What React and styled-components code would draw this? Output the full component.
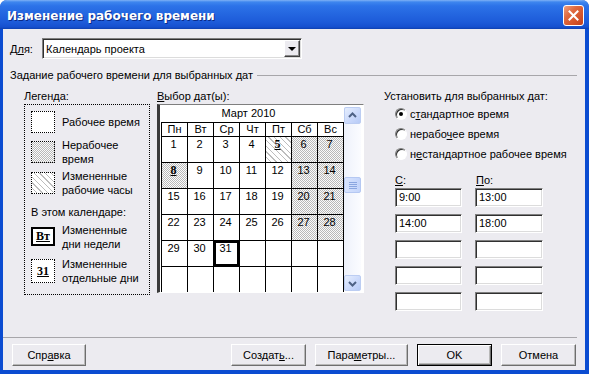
import React from 'react';
import styled, { createGlobalStyle } from 'styled-components';

const GlobalStyle = createGlobalStyle`
  html, body {
    margin: 0;
    padding: 0;
    background: #ffffff;
  }
  body {
    font-family: "Liberation Sans", Arial, sans-serif;
    font-size: 11px;
    color: #000;
  }
  * {
    box-sizing: border-box;
  }
`;

// Ячейки календаря: март 2010 начинается с понедельника
const weekDays = ['Пн', 'Вт', 'Ср', 'Чт', 'Пт', 'Сб', 'Вс'];

const buildDays = () =>
  Array.from({ length: 42 }, (_, i) => {
    const day = i < 31 ? i + 1 : null;
    const col = i % 7;
    let kind = 'work';
    if (day && col >= 5) kind = 'off';
    if (day === 5) kind = 'changed';
    if (day === 8) kind = 'off';
    return {
      id: i,
      day,
      kind,
      mark: day === 5 || day === 8,
      selected: day === 31,
    };
  });

const times = [
  ['9:00', '13:00'],
  ['14:00', '18:00'],
  ['', ''],
  ['', ''],
  ['', ''],
];

const App = () => {
  const days = buildDays();

  return (
    <>
      <GlobalStyle />
      <Window>
        <TitleBar>
          <Title>Изменение рабочего времени</Title>
          <CloseButton>
            <svg width="11" height="11" viewBox="0 0 11 11">
              <path d="M1.5 1.5 L9.5 9.5 M9.5 1.5 L1.5 9.5" stroke="#fff" strokeWidth="2" strokeLinecap="square" />
            </svg>
          </CloseButton>
        </TitleBar>

        <Frame>
          <ForRow>
            <FieldLabel>Д<u>л</u>я:</FieldLabel>
            <Combo>
              <ComboText>Календарь проекта</ComboText>
              <ComboButton>
                <Triangle />
              </ComboButton>
            </Combo>
          </ForRow>

          <GroupHeader>
            <span>Задание рабочего времени для выбранных дат</span>
            <GroupLine />
          </GroupHeader>

          <Main>
            <Column>
              <SectionLabel>Легенда:</SectionLabel>
              <LegendBox>
                <LegendItem $h={22}>
                  <Swatch $kind="work" />
                  <LegendText>Рабочее время</LegendText>
                </LegendItem>
                <LegendItem $h={22} $mt={8}>
                  <Swatch $kind="off" />
                  <LegendText>Нерабочее<br />время</LegendText>
                </LegendItem>
                <LegendItem $h={22} $mt={9}>
                  <Swatch $kind="changed" />
                  <LegendText>Измененные<br />рабочие часы</LegendText>
                </LegendItem>
                <CalendarNote>В этом календаре:</CalendarNote>
                <LegendItem $h={19} $mt={8}>
                  <Swatch $kind="week">Вт</Swatch>
                  <LegendText>Измененные<br />дни недели</LegendText>
                </LegendItem>
                <LegendItem $h={24} $mt={13}>
                  <Swatch $kind="single">31</Swatch>
                  <LegendText>Измененные<br />отдельные дни</LegendText>
                </LegendItem>
              </LegendBox>
            </Column>

            <Column>
              <SectionLabel><u>В</u>ыбор дат(ы):</SectionLabel>
              <CalendarBox>
                <MonthArea>
                  <MonthTitle>Март 2010</MonthTitle>
                  <DayGrid>
                    {weekDays.map((d) => (
                      <DayHead key={d}>{d}</DayHead>
                    ))}
                    {days.map((c) => (
                      <DayCell key={c.id} $kind={c.kind} $selected={c.selected}>
                        {c.day && <DayNum $mark={c.mark}>{c.day}</DayNum>}
                      </DayCell>
                    ))}
                  </DayGrid>
                </MonthArea>
                <Scrollbar>
                  <ScrollButton>
                    <svg width="15" height="15" viewBox="0 0 15 15">
                      <path d="M4 9 L7.5 5.5 L11 9" fill="none" stroke="#4d6185" strokeWidth="2" />
                    </svg>
                  </ScrollButton>
                  <ScrollTrack>
                    <ScrollThumb>
                      <svg width="8" height="8" viewBox="0 0 8 8">
                        <path d="M0 1.5 H8 M0 3.5 H8 M0 5.5 H8 M0 7.5 H8" stroke="#8aa6e0" strokeWidth="1" />
                      </svg>
                    </ScrollThumb>
                  </ScrollTrack>
                  <ScrollButton $h={16}>
                    <svg width="15" height="15" viewBox="0 0 15 15">
                      <path d="M4 6 L7.5 9.5 L11 6" fill="none" stroke="#4d6185" strokeWidth="2" />
                    </svg>
                  </ScrollButton>
                </Scrollbar>
              </CalendarBox>
            </Column>

            <Divider />

            <RightPanel>
              <SectionLabel>Установить для выбранных дат:</SectionLabel>
              <RadioGroup>
                <RadioRow>
                  <Radio $checked />
                  <span>с<u>т</u>андартное время</span>
                </RadioRow>
                <RadioRow>
                  <Radio />
                  <span>нерабо<u>ч</u>ее время</span>
                </RadioRow>
                <RadioRow>
                  <Radio />
                  <span>н<u>е</u>стандартное рабочее время</span>
                </RadioRow>
              </RadioGroup>
              <TimeLabels>
                <span><u>С</u>:</span>
                <span><u>П</u>о:</span>
              </TimeLabels>
              <TimeGrid>
                {times.map(([from, to], i) => (
                  <React.Fragment key={i}>
                    <TimeInput>{from}</TimeInput>
                    <TimeInput>{to}</TimeInput>
                  </React.Fragment>
                ))}
              </TimeGrid>
            </RightPanel>
          </Main>

          <BottomLine />

          <ButtonRow>
            <Button $w={74}>Спр<u>а</u>вка</Button>
            <ButtonGroup>
              <Button $w={75}>Создат<u>ь</u>...</Button>
              <Button $w={93}>Пара<u>м</u>етры...</Button>
              <Button $w={75} $default>OK</Button>
              <Button $w={75}>Отмена</Button>
            </ButtonGroup>
          </ButtonRow>
        </Frame>
      </Window>
    </>
  );
};

const Window = styled.div`
  width: 589px;
  height: 374px;
  display: flex;
  flex-direction: column;
  background: #0b4cd1;
  border-radius: 7px 7px 0 0;
  overflow: hidden;
`;

const TitleBar = styled.div`
  height: 29px;
  flex-shrink: 0;
  display: flex;
  align-items: center;
  justify-content: space-between;
  padding: 0 5px 0 7px;
  background: linear-gradient(
    to bottom,
    #7fb1f5 0px,
    #3e86ee 2px,
    #2c72e8 6px,
    #2466e0 14px,
    #1d5bd9 22px,
    #1650cf 27px,
    #0e40b0 29px
  );
`;

const Title = styled.div`
  font-family: "DejaVu Sans", Verdana, sans-serif;
  font-weight: bold;
  font-size: 12px;
  color: #ffffff;
  padding-top: 3px;
  text-shadow: 1px 1px 0 #0a2a86;
`;

const CloseButton = styled.div`
  width: 21px;
  height: 21px;
  margin-top: 2px;
  border: 1px solid #ffffff;
  border-radius: 3px;
  display: flex;
  align-items: center;
  justify-content: center;
  background: linear-gradient(135deg, #f0a07f 0%, #e06a40 35%, #d4532a 70%, #c0401c 100%);
`;

const Frame = styled.div`
  flex: 1;
  margin: 0 4px 4px 3px;
  background: #ecebf0;
  display: flex;
  flex-direction: column;
`;

const ForRow = styled.div`
  margin-top: 9px;
  height: 21px;
  display: flex;
  align-items: center;
  padding-left: 7px;
`;

const FieldLabel = styled.span`
  width: 32px;
`;

const Combo = styled.div`
  width: 260px;
  height: 21px;
  display: flex;
  align-items: center;
  background: #ffffff;
  border: 1px solid;
  border-color: #7f7f7f #ffffff #ffffff #7f7f7f;
  box-shadow: inset 1px 1px 0 #303030, inset -1px -1px 0 #dcdcdc;
`;

const ComboText = styled.span`
  flex: 1;
  padding-left: 3px;
`;

const ComboButton = styled.div`
  width: 16px;
  height: 17px;
  margin-right: 1px;
  display: flex;
  align-items: center;
  justify-content: center;
  background: #ecebf0;
  border: 1px solid;
  border-color: #ffffff #404040 #404040 #ffffff;
  box-shadow: inset -1px -1px 0 #8a8a8a;
`;

const Triangle = styled.span`
  width: 0;
  height: 0;
  border-left: 4px solid transparent;
  border-right: 4px solid transparent;
  border-top: 4px solid #000;
  margin-top: 1px;
`;

const GroupHeader = styled.div`
  margin-top: 9px;
  height: 14px;
  display: flex;
  align-items: center;
  padding: 0 8px 0 7px;
`;

const GroupLine = styled.div`
  flex: 1;
  height: 1px;
  margin-left: 4px;
  background: #a7a6aa;
`;

const Main = styled.div`
  margin-top: 1px;
  height: 245px;
  display: grid;
  grid-template-columns: 126px 208px 1px 1fr;
  column-gap: 7px;
  padding-left: 21px;
`;

const Column = styled.div`
  display: flex;
  flex-direction: column;
  padding-top: 6px;
`;

const SectionLabel = styled.div`
  height: 14px;
  line-height: 14px;
  white-space: nowrap;
`;

const LegendBox = styled.div`
  margin-top: 1px;
  height: 191px;
  border: 1px dotted #000;
  padding: 6px;
  display: flex;
  flex-direction: column;
`;

const LegendItem = styled.div`
  height: ${(p) => p.$h}px;
  margin-top: ${(p) => p.$mt || 0}px;
  display: flex;
  align-items: center;
  gap: 7px;
  flex-shrink: 0;
`;

const swatchBg = {
  work: '#ffffff',
  off: 'repeating-conic-gradient(#b9b9b9 0 25%, #fbfbfb 0 50%) 0 0 / 2px 2px',
  changed: 'repeating-linear-gradient(45deg, #ffffff 0 3px, #bdbdbd 3px 4px)',
  week: '#ffffff',
  single: '#ffffff',
};

const Swatch = styled.div`
  width: 24px;
  height: 100%;
  flex-shrink: 0;
  background: ${(p) => swatchBg[p.$kind]};
  border: ${(p) => (p.$kind === 'week' ? '2px solid #000' : '1px dotted #000')};
  display: flex;
  align-items: center;
  justify-content: center;
  font-family: "Liberation Serif", "Times New Roman", serif;
  font-weight: bold;
  font-size: 12px;
  text-decoration: underline;
`;

const LegendText = styled.div`
  line-height: 14px;
  white-space: nowrap;
`;

const CalendarNote = styled.div`
  margin-top: 11px;
  height: 14px;
  line-height: 14px;
  white-space: nowrap;
`;

const CalendarBox = styled.div`
  margin-top: 1px;
  width: 207px;
  height: 189px;
  display: flex;
  overflow: hidden;
  background: #ffffff;
  border-top: 1px solid #7f7f7f;
  border-left: 3px solid #3a3a3a;
  border-right: 1px solid #ffffff;
  border-bottom: 1px solid #ffffff;
`;

const MonthArea = styled.div`
  margin-left: 1px;
  width: 183px;
  display: flex;
  flex-direction: column;
`;

const MonthTitle = styled.div`
  height: 17px;
  line-height: 17px;
  text-align: center;
  padding-right: 8px;
  flex-shrink: 0;
`;

const DayGrid = styled.div`
  display: grid;
  grid-template-columns: repeat(7, 25px);
  grid-template-rows: 13px repeat(6, 25px);
  gap: 1px;
  background: #000;
  border: 1px solid #000;
  flex-shrink: 0;
`;

const DayHead = styled.div`
  background: #ffffff;
  text-align: center;
  line-height: 13px;
`;

const DayCell = styled.div`
  background: ${(p) => swatchBg[p.$kind]};
  box-shadow: ${(p) => (p.$selected ? 'inset 0 0 0 2px #000' : 'none')};
  padding-top: 1px;
`;

const DayNum = styled.div`
  width: 23px;
  text-align: center;
  line-height: 12px;
  font-family: ${(p) => (p.$mark ? '"Liberation Serif", "Times New Roman", serif' : 'inherit')};
  font-weight: ${(p) => (p.$mark ? 'bold' : 'normal')};
  font-size: ${(p) => (p.$mark ? '12px' : '11px')};
  text-decoration: ${(p) => (p.$mark ? 'underline' : 'none')};
`;

const Scrollbar = styled.div`
  width: 17px;
  margin: 2px 0 1px 0;
  display: flex;
  flex-direction: column;
  background: linear-gradient(to right, #eef2fb, #fbfcff);
`;

const ScrollButton = styled.div`
  height: ${(p) => p.$h || 17}px;
  flex-shrink: 0;
  display: flex;
  align-items: center;
  justify-content: center;
  border: 1px solid #bccdf2;
  border-radius: 2px;
  background: linear-gradient(135deg, #e6eefd 0%, #c9d8fb 60%, #b7cbf6 100%);
`;

const ScrollTrack = styled.div`
  flex: 1;
  padding-top: 53px;
`;

const ScrollThumb = styled.div`
  height: 16px;
  display: flex;
  align-items: center;
  justify-content: center;
  border: 1px solid #b5c8f2;
  border-radius: 2px;
  background: linear-gradient(to right, #d7e3fd, #c4d5fb);
`;

const Divider = styled.div`
  background: #a7a6aa;
  margin-left: 1px;
`;

const RightPanel = styled.div`
  display: flex;
  flex-direction: column;
  padding: 6px 0 0 4px;
`;

const RadioGroup = styled.div`
  margin-top: 1px;
  display: flex;
  flex-direction: column;
`;

const RadioRow = styled.div`
  height: 20px;
  display: flex;
  align-items: center;
  gap: 3px;
  padding-left: 11px;
  white-space: nowrap;
`;

const Radio = styled.span`
  width: 12px;
  height: 12px;
  flex-shrink: 0;
  border-radius: 50%;
  background: #ffffff;
  border: 1px solid;
  border-color: #7f7f7f #ffffff #ffffff #7f7f7f;
  box-shadow: inset 1px 1px 0 #303030;
  display: flex;
  align-items: center;
  justify-content: center;

  &::after {
    content: '';
    width: 4px;
    height: 4px;
    border-radius: 50%;
    background: ${(p) => (p.$checked ? '#000' : 'transparent')};
  }
`;

const TimeLabels = styled.div`
  margin-top: 9px;
  height: 14px;
  line-height: 14px;
  display: grid;
  grid-template-columns: 68px 68px;
  column-gap: 13px;
  padding-left: 11px;
`;

const TimeGrid = styled.div`
  margin-top: 1px;
  display: grid;
  grid-template-columns: 67px 68px;
  grid-auto-rows: 19px;
  column-gap: 13px;
  row-gap: 7px;
  padding-left: 11px;
`;

const TimeInput = styled.div`
  background: #ffffff;
  border: 1px solid;
  border-color: #7f7f7f #ffffff #ffffff #7f7f7f;
  box-shadow: inset 1px 1px 0 #303030, inset -1px -1px 0 #dcdcdc;
  padding-left: 3px;
  line-height: 17px;
`;

const BottomLine = styled.div`
  margin-top: 9px;
  margin-right: 8px;
  height: 1px;
  background: #a7a6aa;
`;

const ButtonRow = styled.div`
  margin-top: 6px;
  height: 22px;
  display: flex;
  justify-content: space-between;
  padding: 0 9px;
`;

const ButtonGroup = styled.div`
  display: flex;
  gap: 9px;
`;

const Button = styled.div`
  width: ${(p) => p.$w}px;
  height: 22px;
  display: flex;
  align-items: center;
  justify-content: center;
  background: #ecebf0;
  border: 1px solid;
  border-color: ${(p) => (p.$default ? '#000' : '#ffffff #6e6e6e #6e6e6e #ffffff')};
  box-shadow: ${(p) =>
    p.$default
      ? 'inset 1px 1px 0 #ffffff, inset -1px -1px 0 #6e6e6e, inset -2px -2px 0 #b8b8b8'
      : 'inset -1px -1px 0 #b8b8b8'};
`;

export default App;
